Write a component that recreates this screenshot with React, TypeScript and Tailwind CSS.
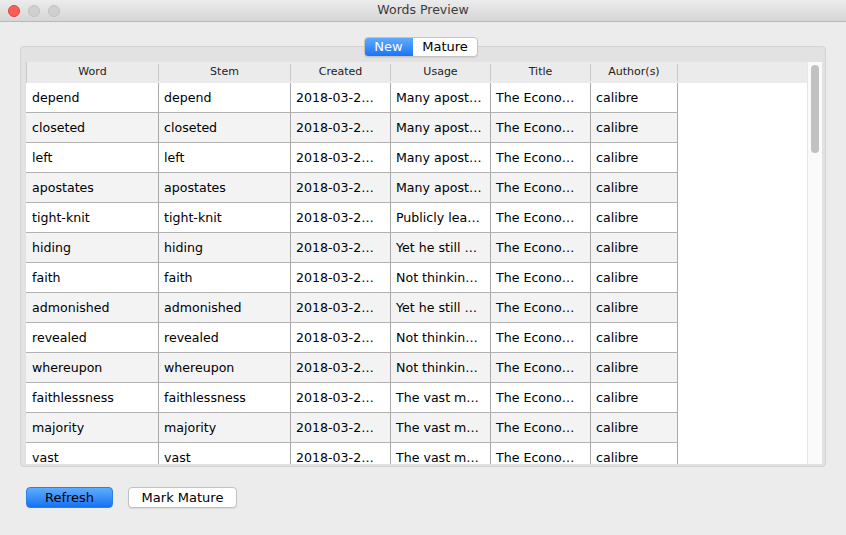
import React from "react";

const rows = [
  ["depend", "Many apost…"],
  ["closeted", "Many apost…"],
  ["left", "Many apost…"],
  ["apostates", "Many apost…"],
  ["tight-knit", "Publicly lea…"],
  ["hiding", "Yet he still …"],
  ["faith", "Not thinkin…"],
  ["admonished", "Yet he still …"],
  ["revealed", "Not thinkin…"],
  ["whereupon", "Not thinkin…"],
  ["faithlessness", "The vast m…"],
  ["majority", "The vast m…"],
  ["vast", "The vast m…"],
];

const cols = [
  { name: "Word", w: "w-[132px]" },
  { name: "Stem", w: "w-[132px]" },
  { name: "Created", w: "w-[100px]" },
  { name: "Usage", w: "w-[100px]" },
  { name: "Title", w: "w-[100px]" },
  { name: "Author(s)", w: "w-[87px]" },
];

const App = () => {
  return (
    <div
      className="w-[846px] h-[535px] bg-[#ececec] flex flex-col overflow-hidden text-black"
      style={{ fontFamily: '"DejaVu Sans", "Liberation Sans", sans-serif' }}
    >
      {/* title bar */}
      <div className="relative h-[22px] shrink-0 bg-gradient-to-b from-[#ececec] to-[#d6d6d6] border-b border-[#b8b8b8] flex items-center justify-center">
        <div className="absolute left-[8px] top-[5px] flex gap-[8px]">
          <div className="w-[12px] h-[12px] rounded-full bg-[#fc5f57] border border-[#e0443e]" />
          <div className="w-[12px] h-[12px] rounded-full bg-[#d0d0d0] border border-[#c0c0c0]" />
          <div className="w-[12px] h-[12px] rounded-full bg-[#d0d0d0] border border-[#c0c0c0]" />
        </div>
        <span className="text-[12.5px] text-[#3b3b3b]">Words Preview</span>
      </div>

      <div className="flex flex-col px-[20px] pt-[15px]">
        {/* tabs */}
        <div className="relative z-10 flex justify-center">
          <div className="flex h-[20px] rounded-[4px] border border-[#c4c4c4] bg-white shadow-[0_1px_1px_rgba(0,0,0,0.08)] overflow-hidden -ml-[4px]">
            <div className="w-[49px] -my-px -ml-px flex items-center justify-center text-[13px] text-white bg-gradient-to-b from-[#62aefd] to-[#1271f3] rounded-l-[4px]">
              New
            </div>
            <div className="w-[64px] flex items-center justify-center text-[13px]">Mature</div>
          </div>
        </div>

        {/* panel */}
        <div className="-mt-[11px] h-[421px] rounded-[4px] border border-[#d3d3d3] bg-[#e2e2e2] pt-[15px] pl-[5px] pr-[3px] pb-[2px] flex">
          <div className="flex-1 flex bg-white overflow-hidden">
            <div className="flex-1 flex flex-col overflow-hidden">
              {/* header */}
              <div className="h-[21px] shrink-0 flex bg-[#ebebeb] border-l border-[#c8c8c8]">
                {cols.map((c) => (
                  <div
                    key={c.name}
                    className={`${c.w} shrink-0 border-r border-[#c8c8c8] my-[2px] flex items-center justify-center text-[11px] text-[#222]`}
                  >
                    {c.name}
                  </div>
                ))}
              </div>
              {/* body */}
              <div className="flex flex-col">
                {rows.map(([w, u], i) => (
                  <div
                    key={w}
                    className={`flex h-[30px] shrink-0 w-[652px] pl-px border-b border-[#b2b2b2] ${
                      i % 2 ? "bg-[#f3f3f3]" : "bg-white"
                    }`}
                  >
                    {[w, w, "2018-03-2…", u, "The Econo…", "calibre"].map((t, j) => (
                      <div
                        key={j}
                        className={`${cols[j].w} shrink-0 border-r border-[#a9a9a9] pl-[5px] pt-[2px] flex items-center text-[12.6px] whitespace-nowrap overflow-hidden`}
                      >
                        {t}
                      </div>
                    ))}
                  </div>
                ))}
              </div>
            </div>
            {/* scrollbar */}
            <div className="w-[15px] shrink-0 bg-[#fafafa] border-l border-[#e6e6e6] pt-[3px] flex justify-center">
              <div className="w-[8px] h-[88px] rounded-full bg-[#c1c1c1]" />
            </div>
          </div>
        </div>

        {/* buttons */}
        <div className="flex gap-[15px] mt-[20px] pl-[6px]">
          <button className="w-[87px] h-[21px] rounded-[4px] bg-gradient-to-b from-[#5eacfd] to-[#1272f3] border border-[#2a7fe8] text-[13px] flex items-center justify-center">
            Refresh
          </button>
          <button className="w-[109px] h-[21px] rounded-[4px] bg-white border border-[#c2c2c2] shadow-[0_1px_1px_rgba(0,0,0,0.08)] text-[13px] flex items-center justify-center">
            Mark Mature
          </button>
        </div>
      </div>
    </div>
  );
};

export default App;
